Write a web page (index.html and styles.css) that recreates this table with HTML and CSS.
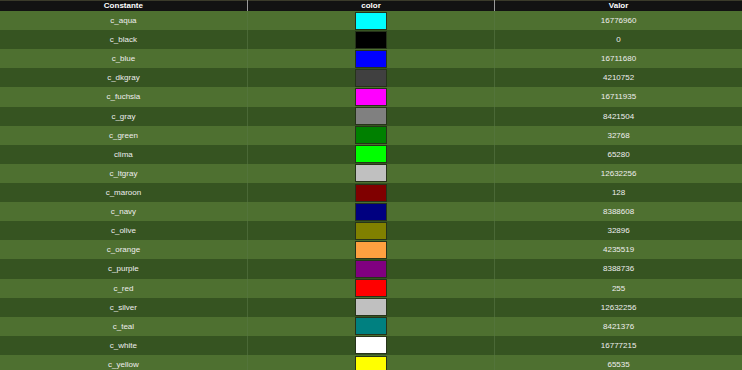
FILE: index.html
```html
<!DOCTYPE html>
<html>
<head>
<meta charset="utf-8">
<link rel="stylesheet" href="styles.css">
</head>
<body>
<table class="colors">
<thead>
<tr><th>Constante</th><th>color</th><th>Valor</th></tr>
</thead>
<tbody>
<tr><td>c_aqua</td><td><span class="sw" style="background:#00ffff"></span></td><td>16776960</td></tr>
<tr><td>c_black</td><td><span class="sw" style="background:#000000"></span></td><td>0</td></tr>
<tr><td>c_blue</td><td><span class="sw" style="background:#0000ff"></span></td><td>16711680</td></tr>
<tr><td>c_dkgray</td><td><span class="sw" style="background:#404040"></span></td><td>4210752</td></tr>
<tr><td>c_fuchsia</td><td><span class="sw" style="background:#ff00ff"></span></td><td>16711935</td></tr>
<tr><td>c_gray</td><td><span class="sw" style="background:#808080"></span></td><td>8421504</td></tr>
<tr><td>c_green</td><td><span class="sw" style="background:#008000"></span></td><td>32768</td></tr>
<tr><td>clima</td><td><span class="sw" style="background:#00ff00"></span></td><td>65280</td></tr>
<tr><td>c_ltgray</td><td><span class="sw" style="background:#c0c0c0"></span></td><td>12632256</td></tr>
<tr><td>c_maroon</td><td><span class="sw" style="background:#800000"></span></td><td>128</td></tr>
<tr><td>c_navy</td><td><span class="sw" style="background:#000080"></span></td><td>8388608</td></tr>
<tr><td>c_olive</td><td><span class="sw" style="background:#808000"></span></td><td>32896</td></tr>
<tr><td>c_orange</td><td><span class="sw" style="background:#ffa040"></span></td><td>4235519</td></tr>
<tr><td>c_purple</td><td><span class="sw" style="background:#800080"></span></td><td>8388736</td></tr>
<tr><td>c_red</td><td><span class="sw" style="background:#ff0000"></span></td><td>255</td></tr>
<tr><td>c_silver</td><td><span class="sw" style="background:#c0c0c0"></span></td><td>12632256</td></tr>
<tr><td>c_teal</td><td><span class="sw" style="background:#008080"></span></td><td>8421376</td></tr>
<tr><td>c_white</td><td><span class="sw" style="background:#ffffff"></span></td><td>16777215</td></tr>
<tr><td>c_yellow</td><td><span class="sw" style="background:#ffff00"></span></td><td>65535</td></tr>
</tbody>
</table>
</body>
</html>
```
FILE: styles.css
```css
html, body {
  margin: 0;
  padding: 0;
  background: #4e7030;
}
.colors {
  width: 100%;
  border-collapse: collapse;
  table-layout: fixed;
  font-family: "Liberation Sans", Arial, sans-serif;
  font-size: 8px;
  color: #eeeeee;
  border-top: 1px solid #3a3a2a;
}
.colors th {
  background: #121212;
  color: #ffffff;
  font-weight: bold;
  height: 10px;
  padding: 0;
  line-height: 10px;
  text-align: center;
  border-left: 1px solid #9a9a9a;
}
.colors th:first-child,
.colors td:first-child {
  border-left: none;
}
.colors td {
  height: 19.12px;
  padding: 0;
  text-align: center;
  vertical-align: middle;
  border-left: 1px solid #53743a;
}
.colors tbody tr:nth-child(odd) {
  background: #4e7030;
}
.colors tbody tr:nth-child(even) {
  background: #365421;
}
.colors tbody tr:nth-child(even) td {
  border-left-color: #4a6836;
}
.sw {
  display: inline-block;
  width: 30px;
  height: 16px;
  border: 1px solid #26331a;
  vertical-align: middle;
}
```
